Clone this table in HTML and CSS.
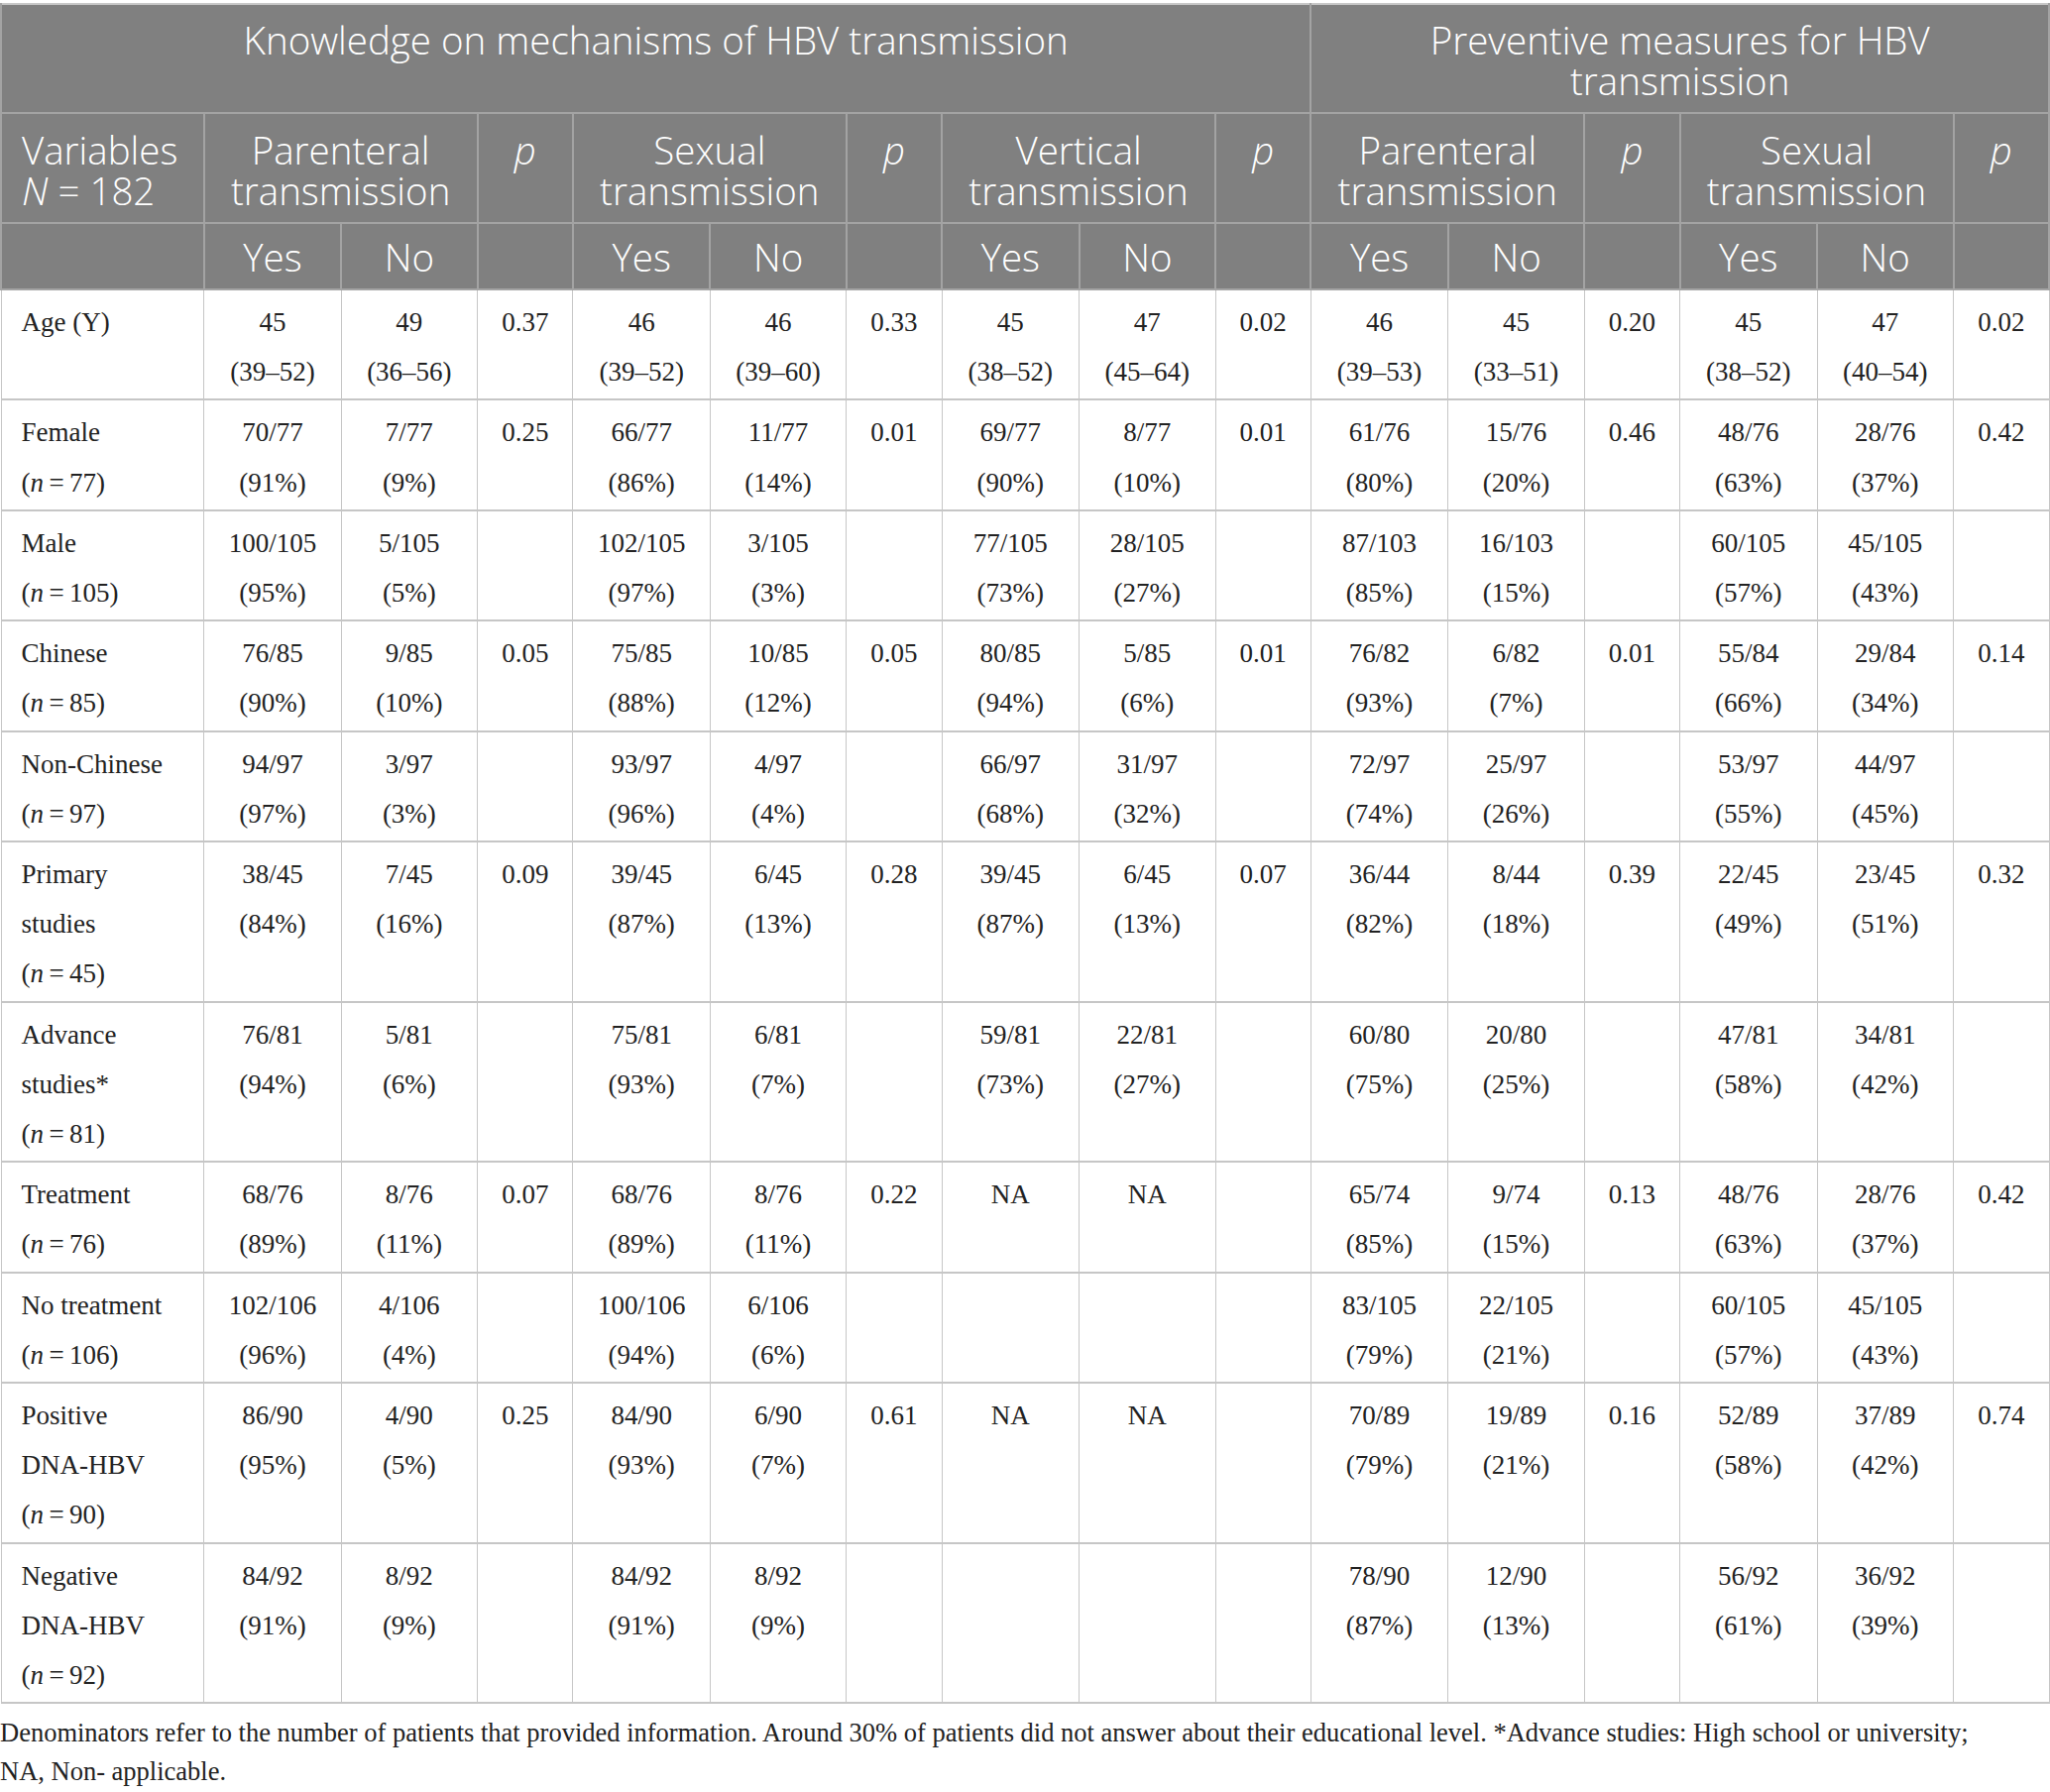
FILE: index.html
```html
<!DOCTYPE html>
<html lang="en">
	<head>
		<meta charset="UTF-8" />
		<meta name="viewport" content="width=device-width, initial-scale=1.0" />
		<title>HBV transmission knowledge table</title>
		<link rel="stylesheet" href="styles.css">
	</head>
	<body>
		<table class="data-table">
			<colgroup>
				<col class="col-var">
				<col class="col-yes"><col class="col-no"><col class="col-p">
				<col class="col-yes"><col class="col-no"><col class="col-p">
				<col class="col-yes"><col class="col-no"><col class="col-p">
				<col class="col-yes"><col class="col-no"><col class="col-p">
				<col class="col-yes"><col class="col-no"><col class="col-p">
			</colgroup>
			<thead>
				<tr class="head-group">
					<th colspan="10">Knowledge on mechanisms of HBV transmission</th>
					<th colspan="6">Preventive measures for HBV<br>transmission</th>
				</tr>
				<tr class="head-type">
					<th class="var">Variables<br><i>N</i> = 182</th>
					<th colspan="2">Parenteral<br>transmission</th>
					<th><i>p</i></th>
					<th colspan="2">Sexual<br>transmission</th>
					<th><i>p</i></th>
					<th colspan="2">Vertical<br>transmission</th>
					<th><i>p</i></th>
					<th colspan="2">Parenteral<br>transmission</th>
					<th><i>p</i></th>
					<th colspan="2">Sexual<br>transmission</th>
					<th><i>p</i></th>
				</tr>
				<tr class="head-answer">
					<th></th>
					<th>Yes</th><th>No</th><th></th>
					<th>Yes</th><th>No</th><th></th>
					<th>Yes</th><th>No</th><th></th>
					<th>Yes</th><th>No</th><th></th>
					<th>Yes</th><th>No</th><th></th>
				</tr>
			</thead>
			<tbody>
				<tr>
					<td class="var">Age (Y)</td>
					<td>45<br>(39–52)</td><td>49<br>(36–56)</td><td>0.37</td>
					<td>46<br>(39–52)</td><td>46<br>(39–60)</td><td>0.33</td>
					<td>45<br>(38–52)</td><td>47<br>(45–64)</td><td>0.02</td>
					<td>46<br>(39–53)</td><td>45<br>(33–51)</td><td>0.20</td>
					<td>45<br>(38–52)</td><td>47<br>(40–54)</td><td>0.02</td>
				</tr>
				<tr>
					<td class="var">Female<br>(<i>n</i>&thinsp;=&thinsp;77)</td>
					<td>70/77<br>(91%)</td><td>7/77<br>(9%)</td><td>0.25</td>
					<td>66/77<br>(86%)</td><td>11/77<br>(14%)</td><td>0.01</td>
					<td>69/77<br>(90%)</td><td>8/77<br>(10%)</td><td>0.01</td>
					<td>61/76<br>(80%)</td><td>15/76<br>(20%)</td><td>0.46</td>
					<td>48/76<br>(63%)</td><td>28/76<br>(37%)</td><td>0.42</td>
				</tr>
				<tr>
					<td class="var">Male<br>(<i>n</i>&thinsp;=&thinsp;105)</td>
					<td>100/105<br>(95%)</td><td>5/105<br>(5%)</td><td></td>
					<td>102/105<br>(97%)</td><td>3/105<br>(3%)</td><td></td>
					<td>77/105<br>(73%)</td><td>28/105<br>(27%)</td><td></td>
					<td>87/103<br>(85%)</td><td>16/103<br>(15%)</td><td></td>
					<td>60/105<br>(57%)</td><td>45/105<br>(43%)</td><td></td>
				</tr>
				<tr>
					<td class="var">Chinese<br>(<i>n</i>&thinsp;=&thinsp;85)</td>
					<td>76/85<br>(90%)</td><td>9/85<br>(10%)</td><td>0.05</td>
					<td>75/85<br>(88%)</td><td>10/85<br>(12%)</td><td>0.05</td>
					<td>80/85<br>(94%)</td><td>5/85<br>(6%)</td><td>0.01</td>
					<td>76/82<br>(93%)</td><td>6/82<br>(7%)</td><td>0.01</td>
					<td>55/84<br>(66%)</td><td>29/84<br>(34%)</td><td>0.14</td>
				</tr>
				<tr>
					<td class="var">Non-Chinese<br>(<i>n</i>&thinsp;=&thinsp;97)</td>
					<td>94/97<br>(97%)</td><td>3/97<br>(3%)</td><td></td>
					<td>93/97<br>(96%)</td><td>4/97<br>(4%)</td><td></td>
					<td>66/97<br>(68%)</td><td>31/97<br>(32%)</td><td></td>
					<td>72/97<br>(74%)</td><td>25/97<br>(26%)</td><td></td>
					<td>53/97<br>(55%)</td><td>44/97<br>(45%)</td><td></td>
				</tr>
				<tr>
					<td class="var">Primary<br>studies<br>(<i>n</i>&thinsp;=&thinsp;45)</td>
					<td>38/45<br>(84%)</td><td>7/45<br>(16%)</td><td>0.09</td>
					<td>39/45<br>(87%)</td><td>6/45<br>(13%)</td><td>0.28</td>
					<td>39/45<br>(87%)</td><td>6/45<br>(13%)</td><td>0.07</td>
					<td>36/44<br>(82%)</td><td>8/44<br>(18%)</td><td>0.39</td>
					<td>22/45<br>(49%)</td><td>23/45<br>(51%)</td><td>0.32</td>
				</tr>
				<tr>
					<td class="var">Advance<br>studies*<br>(<i>n</i>&thinsp;=&thinsp;81)</td>
					<td>76/81<br>(94%)</td><td>5/81<br>(6%)</td><td></td>
					<td>75/81<br>(93%)</td><td>6/81<br>(7%)</td><td></td>
					<td>59/81<br>(73%)</td><td>22/81<br>(27%)</td><td></td>
					<td>60/80<br>(75%)</td><td>20/80<br>(25%)</td><td></td>
					<td>47/81<br>(58%)</td><td>34/81<br>(42%)</td><td></td>
				</tr>
				<tr>
					<td class="var">Treatment<br>(<i>n</i>&thinsp;=&thinsp;76)</td>
					<td>68/76<br>(89%)</td><td>8/76<br>(11%)</td><td>0.07</td>
					<td>68/76<br>(89%)</td><td>8/76<br>(11%)</td><td>0.22</td>
					<td>NA</td><td>NA</td><td></td>
					<td>65/74<br>(85%)</td><td>9/74<br>(15%)</td><td>0.13</td>
					<td>48/76<br>(63%)</td><td>28/76<br>(37%)</td><td>0.42</td>
				</tr>
				<tr>
					<td class="var">No treatment<br>(<i>n</i>&thinsp;=&thinsp;106)</td>
					<td>102/106<br>(96%)</td><td>4/106<br>(4%)</td><td></td>
					<td>100/106<br>(94%)</td><td>6/106<br>(6%)</td><td></td>
					<td></td><td></td><td></td>
					<td>83/105<br>(79%)</td><td>22/105<br>(21%)</td><td></td>
					<td>60/105<br>(57%)</td><td>45/105<br>(43%)</td><td></td>
				</tr>
				<tr>
					<td class="var">Positive<br>DNA-HBV<br>(<i>n</i>&thinsp;=&thinsp;90)</td>
					<td>86/90<br>(95%)</td><td>4/90<br>(5%)</td><td>0.25</td>
					<td>84/90<br>(93%)</td><td>6/90<br>(7%)</td><td>0.61</td>
					<td>NA</td><td>NA</td><td></td>
					<td>70/89<br>(79%)</td><td>19/89<br>(21%)</td><td>0.16</td>
					<td>52/89<br>(58%)</td><td>37/89<br>(42%)</td><td>0.74</td>
				</tr>
				<tr>
					<td class="var">Negative<br>DNA-HBV<br>(<i>n</i>&thinsp;=&thinsp;92)</td>
					<td>84/92<br>(91%)</td><td>8/92<br>(9%)</td><td></td>
					<td>84/92<br>(91%)</td><td>8/92<br>(9%)</td><td></td>
					<td></td><td></td><td></td>
					<td>78/90<br>(87%)</td><td>12/90<br>(13%)</td><td></td>
					<td>56/92<br>(61%)</td><td>36/92<br>(39%)</td><td></td>
				</tr>
			</tbody>
		</table>

		<!-- 表格註解 -->
		<p class="table-note">Denominators refer to the number of patients that provided information. Around 30% of patients did not answer about their educational level. *Advance studies: High school or university;<br>NA, Non- applicable.</p>
	</body>
</html>
```

FILE: styles.css
```css
body {
	margin: 0;
	padding-top: 3px;
	background-color: #fff;
	color: #222;
	font-family: "Liberation Serif", "Times New Roman", serif;
}

.data-table {
	width: 2068px;
	table-layout: fixed;
	border-collapse: collapse;
	border-top: 2px solid #c8c8c8;
}

.col-var { width: 204px; }
.col-yes { width: 138px; }
.col-no { width: 137px; }
.col-p { width: 96px; }

/* 表頭 */
.data-table th {
	background-color: #808080;
	color: #fff;
	font-family: "Open Sans", "Noto Sans", sans-serif;
	font-weight: 300;
	font-size: 38.5px;
	line-height: 41px;
	text-align: center;
	vertical-align: top;
	border: 2px solid #a3a3a3;
}

.head-group th {
	padding: 15px 2px 11px;
	border-top: none;
}

.head-type th {
	padding: 16px 2px 11px;
}

.head-answer th {
	padding: 13px 2px 11px;
}

.data-table th.var {
	text-align: left;
	padding-left: 20px;
}

/* 資料列 */
.data-table td {
	font-size: 27px;
	line-height: 50.2px;
	text-align: center;
	vertical-align: top;
	padding: 7px 6px 2px;
	border: 2px solid #c6c6c6;
	border-left-width: 1px;
	border-right-width: 1px;
}

.data-table td.var {
	text-align: left;
	padding-left: 20px;
}

.table-note {
	margin: 10px 0 0;
	font-size: 26.5px;
	line-height: 39px;
	color: #222;
}
```
